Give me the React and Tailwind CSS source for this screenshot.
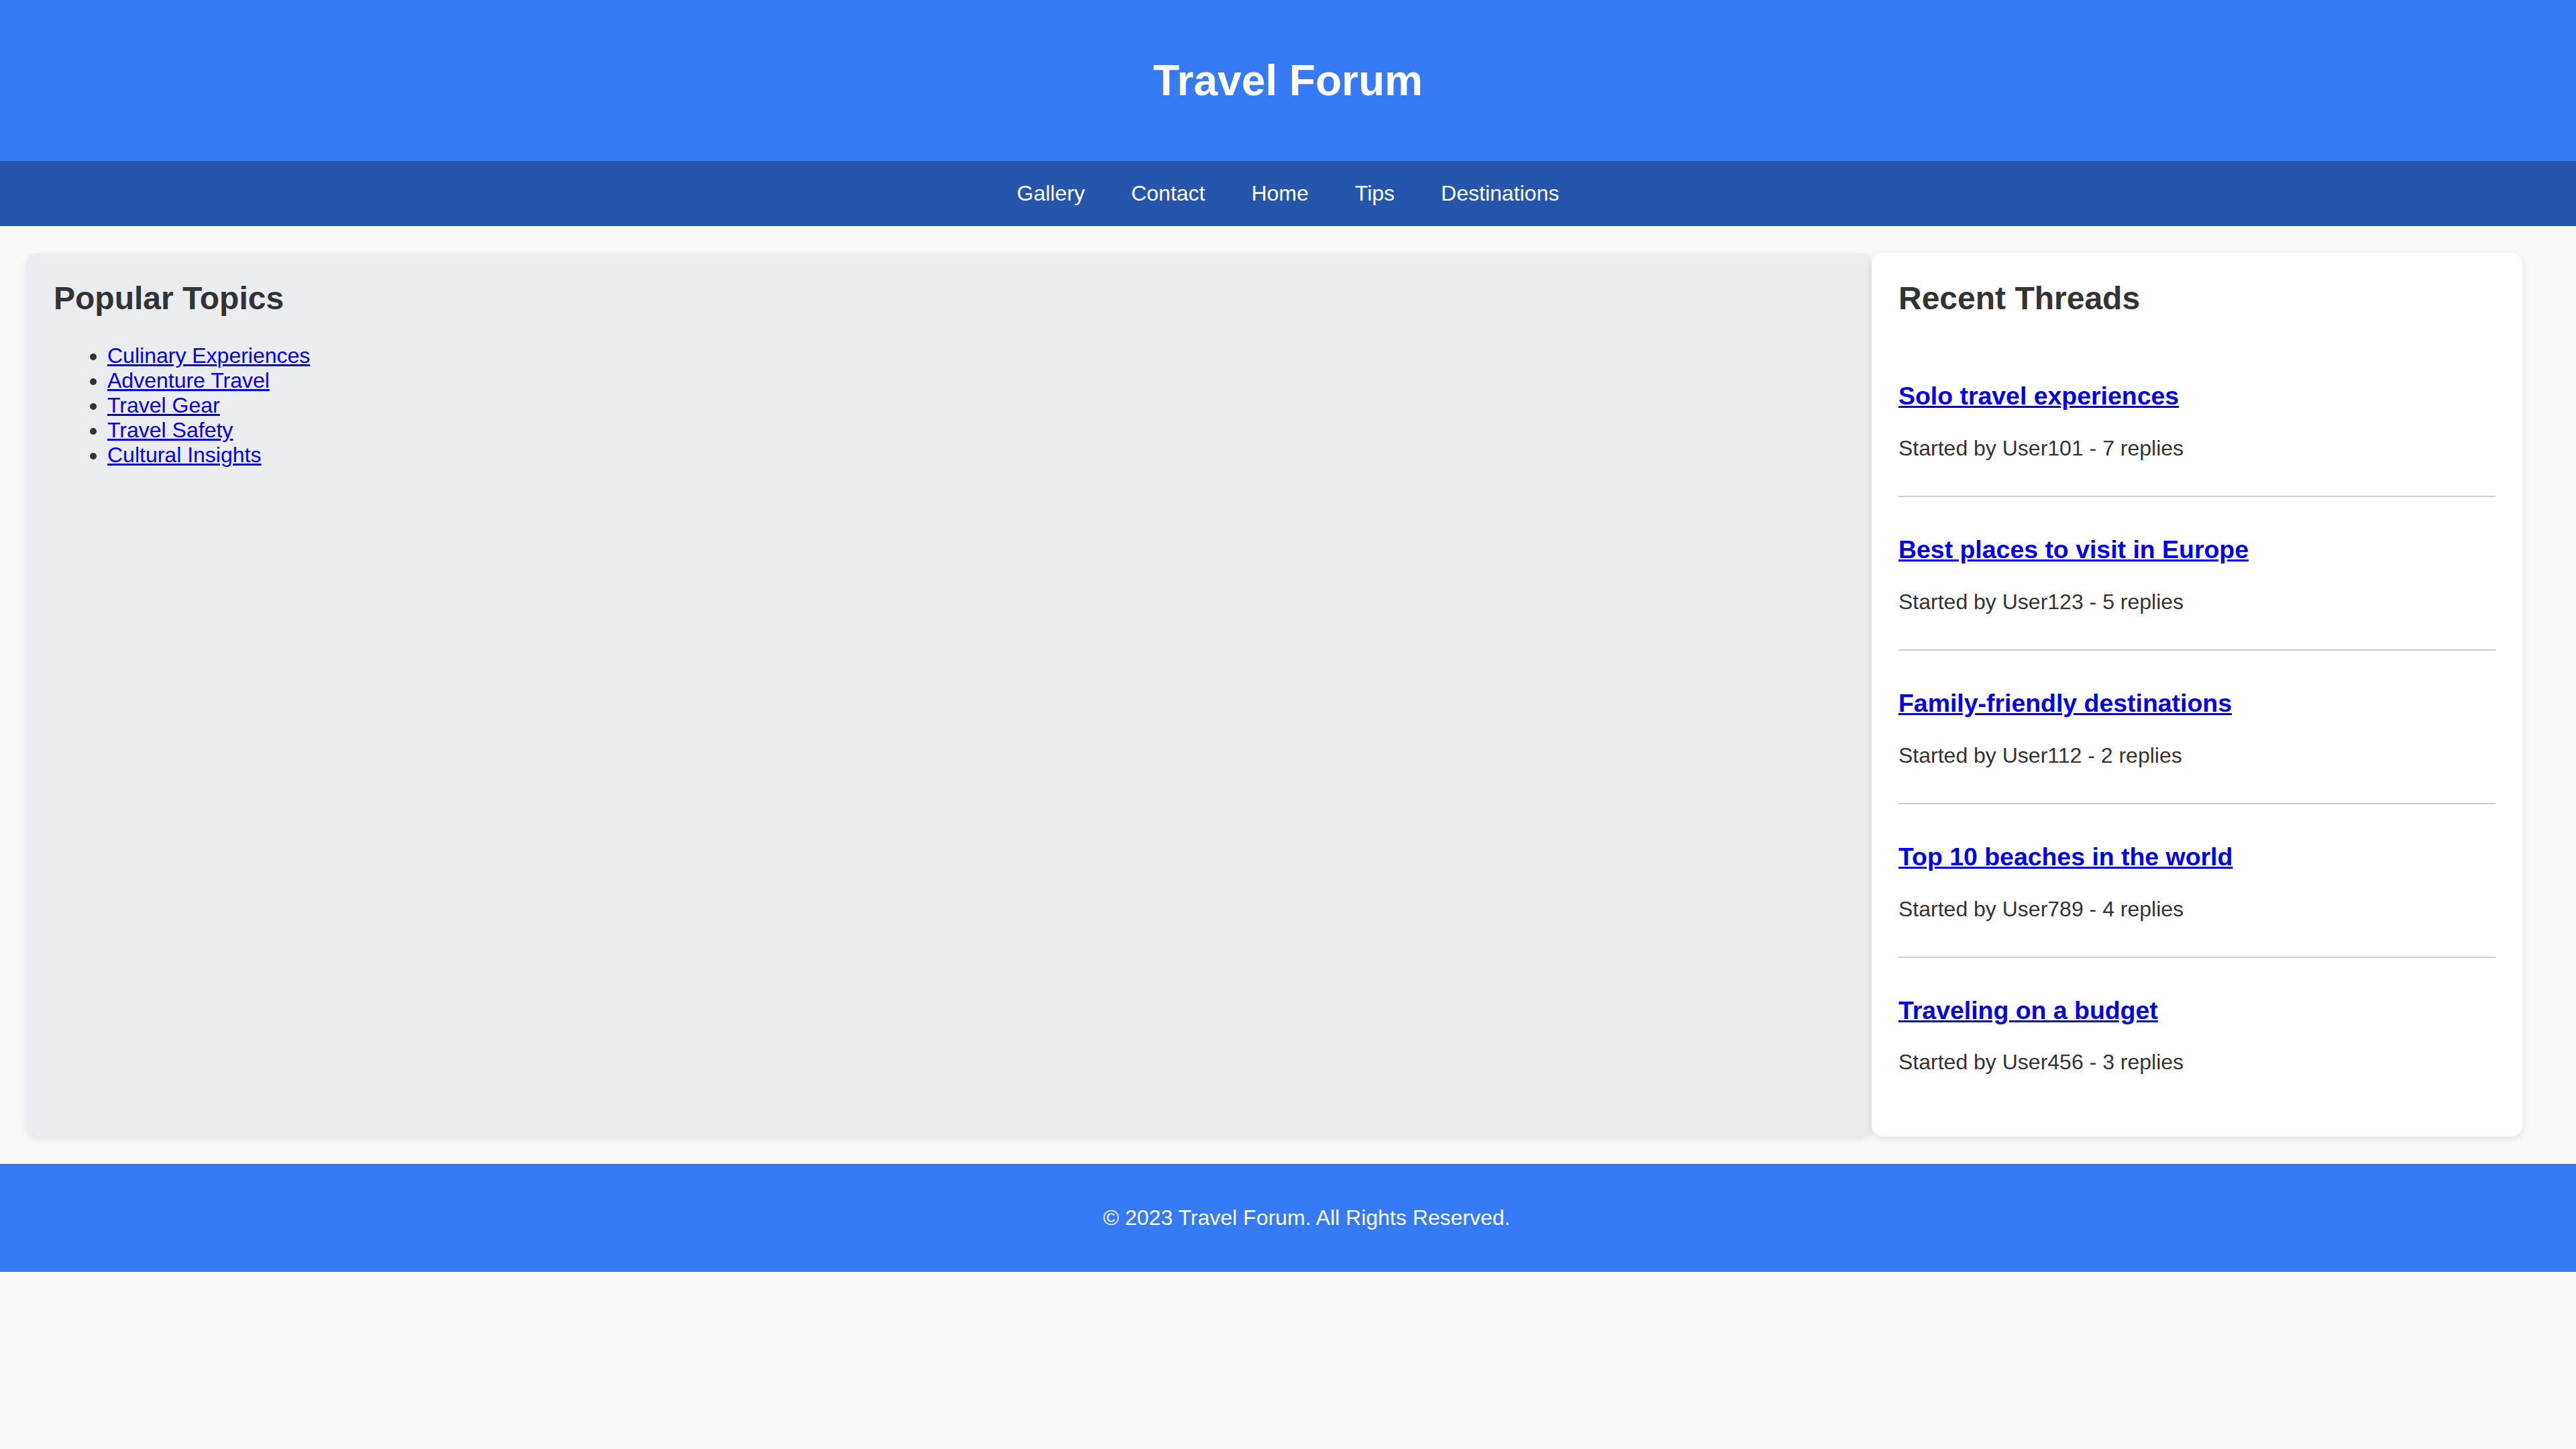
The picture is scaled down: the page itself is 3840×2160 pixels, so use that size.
const navLinks = ["Gallery", "Contact", "Home", "Tips", "Destinations"];

const topics = [
  "Culinary Experiences",
  "Adventure Travel",
  "Travel Gear",
  "Travel Safety",
  "Cultural Insights",
];

const threads = [
  { title: "Solo travel experiences", user: "User101", replies: 7 },
  { title: "Best places to visit in Europe", user: "User123", replies: 5 },
  { title: "Family-friendly destinations", user: "User112", replies: 2 },
  { title: "Top 10 beaches in the world", user: "User789", replies: 4 },
  { title: "Traveling on a budget", user: "User456", replies: 3 },
];

const App = () => {
  return (
    <div className="min-h-screen bg-[#f9f9f9] font-['Liberation_Sans',Arial,sans-serif] text-[#333] leading-[normal]">
      <header className="h-[240px] flex items-center justify-center bg-[#377af5]">
        <h1 className="text-[64px] font-bold text-white leading-[normal]">Travel Forum</h1>
      </header>

      <nav className="h-[97px] flex items-center justify-center gap-[69px] bg-[#2556ac]">
        {navLinks.map((link) => (
          <a key={link} href="#" className="text-[32px] text-white no-underline">
            {link}
          </a>
        ))}
      </nav>

      <main className="flex pt-[40px] pl-[40px] pr-[80px]">
        <section className="w-[2750px] p-[40px] rounded-[16px] bg-[#ebecf0] shadow-[0_4px_12px_rgba(0,0,0,0.1)]">
          <h2 className="text-[48px] font-bold leading-[normal] mb-[40px]">Popular Topics</h2>
          <ul className="list-disc pl-[80px] text-[32px] leading-[normal]">
            {topics.map((topic) => (
              <li key={topic}>
                <a href="#" className="text-[#0000ee] underline">
                  {topic}
                </a>
              </li>
            ))}
          </ul>
        </section>

        <aside className="w-[970px] p-[40px] rounded-[16px] bg-white shadow-[0_4px_12px_rgba(0,0,0,0.1)]">
          <h2 className="text-[48px] font-bold leading-[normal] mb-[40px]">Recent Threads</h2>
          {threads.map((t) => (
            <div key={t.title} className="py-[20px] border-b-2 border-[#cccccc] last:border-b-0">
              <h3 className="mt-[37.44px] text-[37.44px] font-bold leading-[normal]">
                <a href="#" className="text-[#0000ee] underline">
                  {t.title}
                </a>
              </h3>
              <p className="mt-[37.44px] mb-[32px] text-[32px] leading-[normal]">
                Started by {t.user} - {t.replies} replies
              </p>
            </div>
          ))}
        </aside>
      </main>

      <footer className="mt-[41px] h-[161px] flex items-center justify-center pl-[56px] bg-[#377af5]">
        <p className="text-[32px] text-white">© 2023 Travel Forum. All Rights Reserved.</p>
      </footer>
    </div>
  );
};

export default App;
